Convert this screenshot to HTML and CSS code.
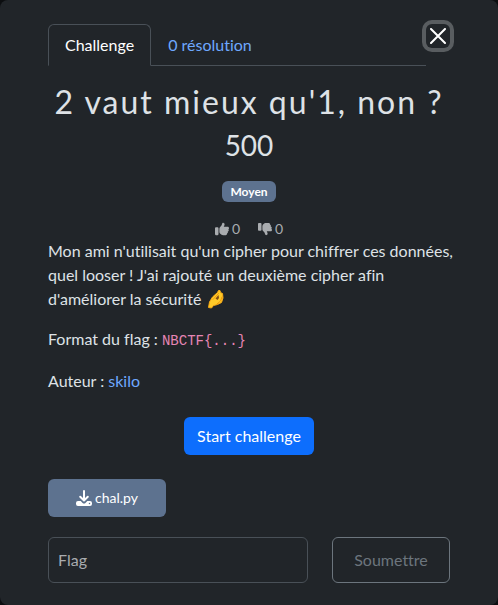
FILE: index.html
```html
<!DOCTYPE html>
<html lang="fr">
<head>
<meta charset="utf-8">
<meta name="viewport" content="width=device-width, initial-scale=1">
<title>2 vaut mieux qu'1, non ?</title>
<link rel="stylesheet" href="styles.css">
</head>
<body>
<main class="modal">
  <header class="modal-top">
    <nav class="tabs">
      <a class="tab tab-active" href="#challenge">Challenge</a>
      <a class="tab" href="#solves">0 résolution</a>
    </nav>
    <button class="close" type="button" aria-label="Fermer">
      <svg viewBox="0 0 16 16" width="16" height="16" aria-hidden="true"><path d="M1 1 15 15M15 1 1 15" stroke="#fff" stroke-width="2" stroke-linecap="round"/></svg>
    </button>
  </header>

  <section class="heading" id="challenge">
    <h1 class="name">2 vaut mieux qu'1, non ?</h1>
    <p class="value">500</p>
    <span class="badge">Moyen</span>
    <div class="votes">
      <button class="vote" type="button" aria-label="J'aime">
        <svg viewBox="0 0 512 512" width="14" height="14" aria-hidden="true"><path d="M313.4 32.9c26 5.2 42.9 30.5 37.7 56.5l-2.3 11.4c-5.3 26.7-15.1 52.1-28.8 75.2H464c26.5 0 48 21.5 48 48 0 18.5-10.5 34.6-25.9 42.6C497 275.4 504 288.9 504 304c0 23.4-16.8 42.9-38.9 47.1 4.4 7.3 6.9 15.8 6.9 24.9 0 21.3-13.9 39.4-33.1 45.6.7 3.3 1.1 6.8 1.1 10.4 0 26.5-21.5 48-48 48H294.5c-19 0-37.5-5.6-53.3-16.1l-38.5-25.7C176 420.4 160 390.4 160 358.3V247.1c0-29.2 13.3-56.7 36-75l7.4-5.9c26.5-21.2 44.6-51 51.2-84.2l2.3-11.4c5.2-26 30.5-42.9 56.5-37.7zM32 192h64c17.700 0 32 14.300 32 32v224c0 17.700-14.300 32-32 32H32c-17.700 0-32-14.300-32-32V224c0-17.700 14.300-32 32-32z" fill="currentColor"/></svg>
        <span>0</span>
      </button>
      <button class="vote" type="button" aria-label="Je n'aime pas">
        <svg viewBox="0 0 512 512" width="14" height="14" aria-hidden="true"><path d="M313.4 479.1c26-5.2 42.9-30.5 37.7-56.5l-2.3-11.4c-5.3-26.7-15.1-52.1-28.8-75.2H464c26.5 0 48-21.5 48-48 0-18.5-10.5-34.6-25.9-42.6C497 236.6 504 223.1 504 208c0-23.4-16.8-42.9-38.9-47.1 4.4-7.3 6.9-15.8 6.9-24.9 0-21.3-13.9-39.4-33.1-45.6.7-3.3 1.1-6.8 1.1-10.4 0-26.5-21.5-48-48-48H294.5c-19 0-37.5 5.6-53.3 16.1l-38.5 25.7C176 91.600 160 121.600 160 153.700v111.200c0 29.200 13.300 56.700 36 75l7.400 5.900c26.500 21.200 44.600 51 51.200 84.200l2.300 11.400c5.200 26 30.500 42.900 56.500 37.700zM32 320h64c17.700 0 32-14.300 32-32V64c0-17.700-14.300-32-32-32H32C14.300 32 0 46.300 0 64v224c0 17.700 14.300 32 32 32z" fill="currentColor"/></svg>
        <span>0</span>
      </button>
    </div>
  </section>

  <section class="description">
    <p>Mon ami n'utilisait qu'un cipher pour chiffrer ces données, quel looser ! J'ai rajouté un deuxième cipher afin d'améliorer la sécurité <svg class="emoji" viewBox="0 0 20 20" width="20" height="20" role="img" aria-label="doigts pincés"><path d="M3.500 18.500 4.500 13 7.500 8 12.500 3.500 13.500 1.500 15 1.500 15.500 3.500 17.500 4.500 18 9 16.500 13.500 12.500 15.500 8.500 16.500 6.500 19Z" fill="#ffca28" stroke="#f9ab16" stroke-linejoin="round"/><path d="M8 10.500 13.500 4.500M12 15l3.500-3L17 8" fill="none" stroke="#ee960c" stroke-linecap="round"/><path d="m10.500 9.500 3-3.500.5 3-1.500 2Z" fill="#804d16"/></svg></p>
    <p>Format du flag : <code>NBCTF{...}</code></p>
    <p>Auteur : <a class="link" href="#skilo">skilo</a></p>
  </section>

  <button class="btn btn-start" type="button">Start challenge</button>

  <div class="grid files">
    <a class="btn btn-file" href="#chal.py">
      <svg viewBox="0 0 16 16" width="16" height="16" aria-hidden="true"><path d="M8 1v9M4.200 6.700 8 10.500l3.800-3.800" fill="none" stroke="currentColor" stroke-width="2" stroke-linecap="round" stroke-linejoin="round"/><path fill-rule="evenodd" d="M2 11h2.700l1.900 1.900a2 2 0 0 0 2.800 0L11.300 11H14a2 2 0 0 1 2 2v1a2 2 0 0 1-2 2H2a2 2 0 0 1-2-2v-1a2 2 0 0 1 2-2Zm11.500 1.750a.75.75 0 1 0 0 1.500.75.75 0 0 0 0-1.500Z" fill="currentColor"/></svg>
      <span>chal.py</span>
    </a>
  </div>

  <form class="grid submit">
    <input class="flag" type="text" placeholder="Flag" aria-label="Flag">
    <button class="btn btn-submit" type="button">Soumettre</button>
  </form>
</main>
</body>
</html>
```
FILE: styles.css
```css
* {
  box-sizing: border-box;
}

body {
  margin: 0;
  background: #0c0e10;
  color: #dee2e6;
  font: 16px/24px Lato, "Liberation Sans", sans-serif;
  font-variant-ligatures: no-common-ligatures;
}

h1,
p {
  margin: 0;
}

button,
input {
  font: inherit;
  font-variant-ligatures: inherit;
}

.modal {
  min-height: 100vh;
  padding: 24px 48px 16px;
  background: #212529;
  border-radius: 8px;
}

.modal-top {
  display: flex;
  align-items: flex-start;
}

.tabs {
  display: flex;
  flex: 1;
  border-bottom: 1px solid #495057;
}

.tab {
  margin-bottom: -1px;
  padding: 8px 16px;
  border: 1px solid transparent;
  border-radius: 6px 6px 0 0;
  color: #6ea8fe;
  text-decoration: none;
}

.tab-active {
  border-color: #495057 #495057 #212529;
  background: #212529;
  color: #fff;
}

.close {
  display: flex;
  padding: 4px;
  border: 0;
  border-radius: 6px;
  background: transparent;
  box-shadow: 0 0 0 4px #595d60;
}

.heading {
  display: flex;
  flex-direction: column;
  align-items: center;
  padding-top: 16px;
  text-align: center;
}

.name {
  font-size: 32px;
  line-height: 40px;
  font-weight: 400;
  letter-spacing: 2px;
}

.value {
  margin: 6px 0 19px;
  font-size: 28px;
  line-height: 34px;
}

.badge {
  padding: 4px 8px;
  border-radius: 6px;
  background: #5d728f;
  color: #fff;
  font-size: 12px;
  line-height: 13px;
  font-weight: 700;
}

.votes {
  display: flex;
  gap: 18px;
  padding-top: 16px;
}

.vote {
  display: flex;
  align-items: center;
  gap: 3px;
  padding: 0;
  border: 0;
  background: transparent;
  color: #a9acaf;
  font-size: 14px;
  line-height: 21px;
}

.description {
  margin-right: -8px;
}

.description p {
  margin-bottom: 16px;
}

.emoji {
  vertical-align: -4px;
}

code {
  color: #e685b5;
  font: 14px/24px "Liberation Mono", monospace;
}

.link {
  color: #6ea8fe;
  text-decoration: none;
}

.btn {
  display: flex;
  align-items: center;
  justify-content: center;
  padding: 6px 12px;
  border: 1px solid transparent;
  border-radius: 6px;
  color: #fff;
  text-decoration: none;
}

.btn-start {
  margin: 24px auto;
  background: #0d6efd;
}

.grid {
  display: grid;
  grid-template-columns: repeat(3, 1fr);
  gap: 24px;
}

.files {
  margin-bottom: 20px;
}

.btn-file {
  gap: 3px;
  background: #5d728f;
  font-size: 14px;
}

.flag {
  grid-column: span 2;
  min-width: 0;
  padding: 10px 9px;
  border: 1px solid #495057;
  border-radius: 6px;
  background: transparent;
  color: #dee2e6;
}

.flag::placeholder {
  color: #a9acaf;
  opacity: 1;
}

.btn-submit {
  padding: 10px 12px;
  border-color: #6c757d;
  background: transparent;
  color: #6c757d;
}
```
